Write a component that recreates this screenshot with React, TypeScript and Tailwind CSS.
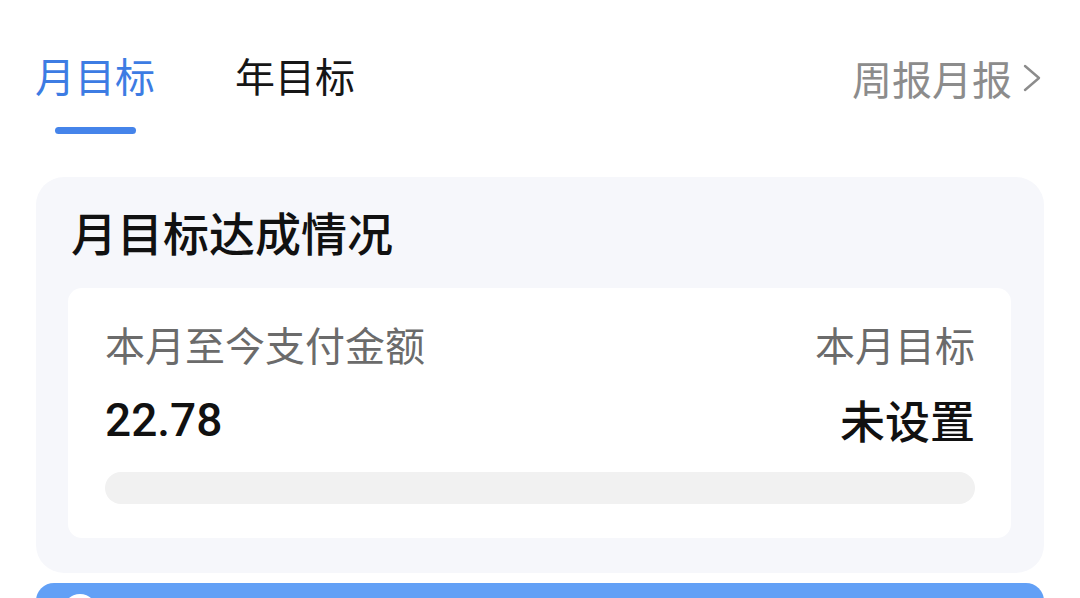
import React from 'react';

const cjk = { fontFamily: '"Noto Sans CJK SC", "Noto Sans", sans-serif' };

const Chevron: React.FC = () => (
  <svg width="19" height="28" viewBox="0 0 19 28" fill="none" className="ml-[11px]">
    <polyline points="2,2 16,14 2,26" stroke="#8c8c8c" strokeWidth="2.4" strokeLinecap="round" strokeLinejoin="round" />
  </svg>
);

const App: React.FC = () => {
  return (
    <div className="w-[1080px] h-[598px] overflow-hidden bg-white" style={cjk}>
      {/* Tabs */}
      <div className="flex items-start justify-between pl-[35px] pr-[38px] pt-[55px]">
        <div className="flex gap-[80px]">
          <div className="flex flex-col items-center">
            <span className="text-[40px] leading-[40px] text-[#3d7ce3]">月目标</span>
            <div className="mt-[32px] w-[81px] h-[7px] rounded-full bg-[#4584ea]" />
          </div>
          <span className="text-[40px] leading-[40px] text-[#161616]">年目标</span>
        </div>
        <div className="flex items-center mt-[3px] text-[#8c8c8c]">
          <span className="text-[40px] leading-[40px]">周报月报</span>
          <Chevron />
        </div>
      </div>

      {/* Card */}
      <div className="mx-[36px] mt-[43px] rounded-[28px] bg-[#f6f7fb] pt-[30px] pb-[35px] pl-[32px] pr-[33px]">
        <div className="pl-[3px] text-[46px] leading-[49px] font-medium text-[#111]">月目标达成情况</div>
        <div className="mt-[32px] rounded-[14px] bg-white pl-[37px] pr-[36px] pt-[36px] pb-[34px]">
          <div className="flex justify-between">
            <div className="flex flex-col">
              <span className="text-[40px] leading-[40px] text-[#6b6b6b]">本月至今支付金额</span>
              <span
                className="mt-[32px] text-[46px] leading-[48px] font-medium text-[#111]"
                style={{ fontFamily: 'Roboto, "Liberation Sans", sans-serif' }}
              >
                22.78
              </span>
            </div>
            <div className="flex flex-col items-end">
              <span className="text-[40px] leading-[40px] text-[#6b6b6b]">本月目标</span>
              <span className="mt-[32px] text-[45px] leading-[48px] font-medium text-[#111]">未设置</span>
            </div>
          </div>
          <div className="mt-[28px] h-[32px] rounded-full bg-[#f1f1f1]" />
        </div>
      </div>

      {/* Next section peeking */}
      <div className="mx-[36px] mt-[10px] h-[40px] rounded-t-[18px] bg-[#62a0f6] pl-[27px] pt-[11px]">
        <div className="w-[34px] h-[34px] rounded-full bg-white" />
      </div>
    </div>
  );
};

export default App;
